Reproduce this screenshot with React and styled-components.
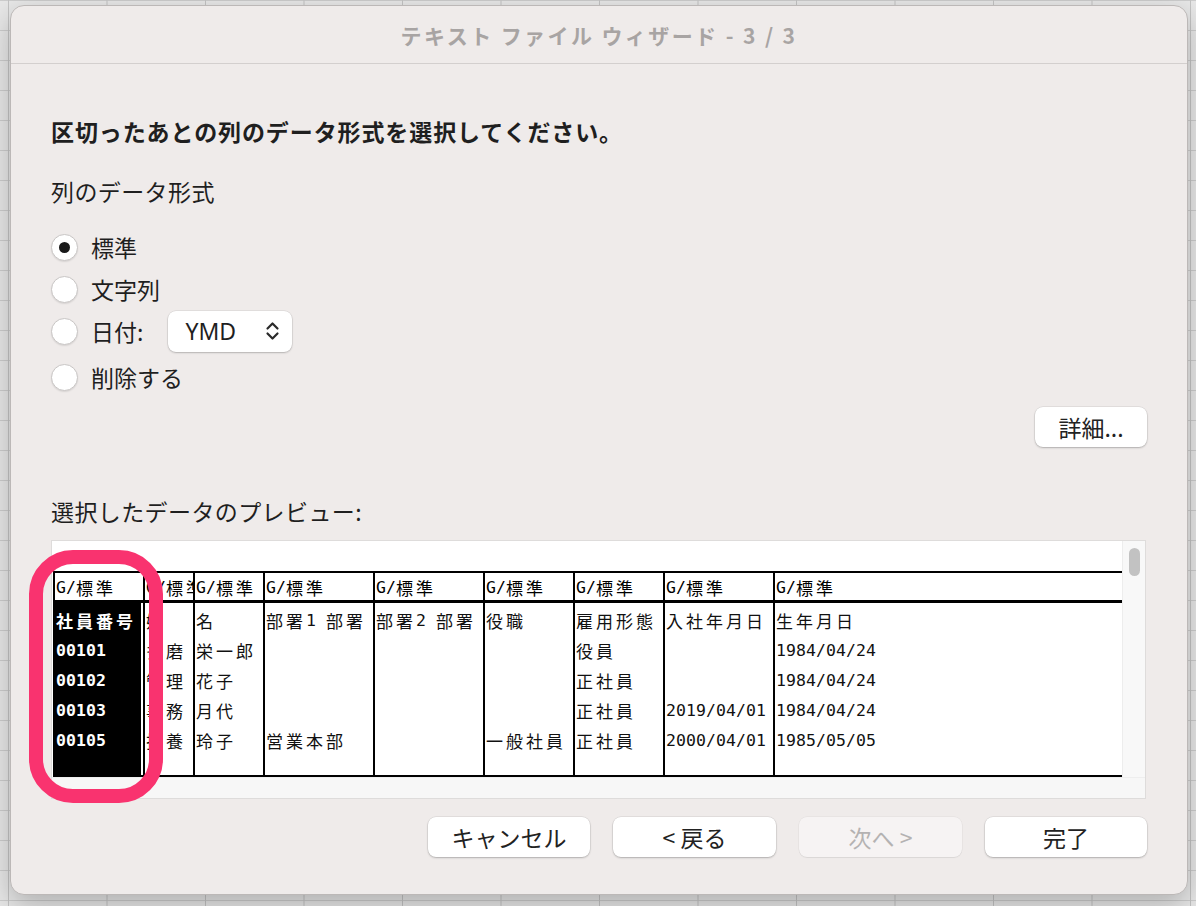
import styled, { createGlobalStyle } from "styled-components";

const GlobalStyle = createGlobalStyle`
  html, body {
    margin: 0;
    padding: 0;
  }
  body {
    width: 1196px;
    height: 906px;
    overflow: hidden;
    font-family: "Noto Sans CJK JP", "Noto Sans", sans-serif;
    color: #1f1f1f;
    background-color: #e8e8e8;
    background-image: linear-gradient(to right, #c4c4c4 1px, transparent 1px),
      linear-gradient(to bottom, #cdcdcd 1px, transparent 1px);
    background-size: 98.5px 30px;
    background-position: 8px 0;
  }
`;

const Page = styled.div`
  padding: 5px 8px 11px 10px;
`;

const Dialog = styled.div`
  width: 1178px;
  height: 890px;
  box-sizing: border-box;
  background: #efebea;
  border: 1px solid #bcb8b7;
  border-radius: 14px;
  box-shadow: 0 10px 30px rgba(0, 0, 0, 0.25);
  display: flex;
  flex-direction: column;
`;

const TitleBar = styled.div`
  height: 57px;
  border-bottom: 1px solid #d3cfce;
  display: flex;
  align-items: center;
  justify-content: center;
  font-size: 21px;
  font-weight: bold;
  letter-spacing: 2.4px;
  color: #a8a4a3;
`;

const Body = styled.div`
  padding: 52px 40px 0;
  display: flex;
  flex-direction: column;
`;

const Heading = styled.h1`
  margin: 0;
  font-size: 23px;
  line-height: 30px;
  font-weight: bold;
  letter-spacing: 0.9px;
`;

const Label = styled.div`
  margin-top: ${(p) => p.$top}px;
  font-size: 23px;
  line-height: 30px;
  letter-spacing: 0.4px;
`;

const RadioList = styled.div`
  margin-top: 20px;
  display: flex;
  flex-direction: column;
`;

const RadioRow = styled.div`
  height: 42px;
  margin-top: ${(p) => (p.$gap ? 4 : 0)}px;
  display: flex;
  align-items: center;
  font-size: 23px;
`;

const RadioCircle = styled.span`
  width: 27px;
  height: 27px;
  box-sizing: border-box;
  border-radius: 50%;
  background: #fff;
  border: 1px solid #c9c6c5;
  box-shadow: 0 1px 1.5px rgba(0, 0, 0, 0.1);
  margin-right: 13px;
  display: flex;
  align-items: center;
  justify-content: center;

  &::after {
    content: "";
    display: ${(p) => (p.$checked ? "block" : "none")};
    width: 11px;
    height: 11px;
    border-radius: 50%;
    background: #1a1a1a;
  }
`;

const Select = styled.div`
  margin-left: 25px;
  width: 124px;
  height: 41px;
  box-sizing: border-box;
  padding: 0 12px 0 17px;
  background: #fff;
  border-radius: 8px;
  box-shadow: 0 0 0 0.5px rgba(0, 0, 0, 0.1), 0 1px 2px rgba(0, 0, 0, 0.2);
  display: flex;
  align-items: center;
  justify-content: space-between;
  font-family: "Noto Sans", "Noto Sans CJK JP", sans-serif;
  font-size: 23px;
`;

const DetailsRow = styled.div`
  margin-top: 9px;
  display: flex;
  justify-content: flex-end;
`;

const Button = styled.button`
  width: ${(p) => p.$w}px;
  height: 40px;
  padding: 0;
  border: none;
  border-radius: 8px;
  font-family: "Noto Sans CJK JP", sans-serif;
  font-size: 23px;
  color: ${(p) => (p.disabled ? "#b4b2b2" : "#222")};
  background: ${(p) => (p.disabled ? "#f6f3f3" : "#fff")};
  box-shadow: ${(p) =>
    p.disabled
      ? "0 0 0 0.5px rgba(0,0,0,0.06), 0 1px 1px rgba(0,0,0,0.06)"
      : "0 0 0 0.5px rgba(0,0,0,0.1), 0 1px 2px rgba(0,0,0,0.22)"};
`;

const PreviewBox = styled.div`
  margin-top: 14px;
  height: 259px;
  margin-right: 1px;
  box-sizing: border-box;
  border: 1px solid #dedcdb;
  background: #fff;
  position: relative;
  display: grid;
  grid-template-columns: 1fr 23px;
  grid-template-rows: 1fr 21px;
`;

const TableArea = styled.div`
  padding: 30px 0 0 1px;
  overflow: hidden;
`;

const VTrack = styled.div`
  background: #f8f8f8;
  border-left: 1px solid #ededed;
  padding-top: 7px;
`;

const Thumb = styled.div`
  width: 11px;
  height: 28px;
  margin-left: 6px;
  border-radius: 6px;
  background: #c2c2c2;
`;

const HTrack = styled.div`
  grid-column: 1 / span 2;
  background: #f7f7f7;
  border-top: 1px solid #eeeeee;
`;

const Table = styled.div`
  width: 1072px;
  height: 206px;
  box-sizing: border-box;
  border: 2px solid #000;
  display: flex;
`;

const Column = styled.div`
  flex: 0 0 ${(p) => p.$w}px;
  box-sizing: border-box;
  border-left: ${(p) => (p.$first ? "none" : "2px solid #000")};
  display: flex;
  flex-direction: column;
  overflow: hidden;
`;

const HeaderCell = styled.div`
  height: 25px;
  padding: 2px 0 0 1px;
  line-height: 25px;
  border-bottom: 3px solid #000;
  white-space: nowrap;
  color: #000;
`;

const ColumnBody = styled.div`
  flex: 1;
  padding-top: 3px;
  margin-right: ${(p) => (p.$selected ? 2 : 0)}px;
  background: ${(p) => (p.$selected ? "#000" : "#fff")};
  color: ${(p) => (p.$selected ? "#fff" : "#111")};
  font-weight: ${(p) => (p.$selected ? "bold" : "normal")};
`;

const Cell = styled.div`
  height: 30px;
  line-height: 30px;
  padding-left: 1px;
  white-space: nowrap;
`;

const Glyph = styled.span`
  display: inline-block;
  vertical-align: top;
  width: ${(p) => (p.$wide ? 20 : 10)}px;
  font-family: ${(p) =>
    p.$wide
      ? `"Noto Sans CJK JP", sans-serif`
      : `"DejaVu Sans Mono", "Liberation Mono", monospace`};
  font-size: ${(p) => (p.$wide ? 17 : 16.5)}px;
`;

const Ring = styled.div`
  position: absolute;
  left: -23px;
  top: 9px;
  width: 134px;
  height: 253px;
  box-sizing: border-box;
  border: 14px solid #f9336f;
  border-radius: 44px;
  pointer-events: none;
`;

const ButtonRow = styled.div`
  margin-top: 18px;
  display: flex;
  justify-content: flex-end;
  gap: 23px;
`;

const Mono = ({ text }) =>
  Array.from(text).map((c, i) => (
    <Glyph key={i} $wide={c.charCodeAt(0) > 0x2e80}>
      {c === " " ? "\u00a0" : c}
    </Glyph>
  ));

const columns = [
  { w: 88, rows: ["社員番号", "00101", "00102", "00103", "00105"] },
  { w: 50, rows: ["姓", "多磨", "管理", "事務", "扶養"] },
  { w: 70, rows: ["名", "栄一郎", "花子", "月代", "玲子"] },
  { w: 110, rows: ["部署1 部署", "", "", "", "営業本部"] },
  { w: 110, rows: ["部署2 部署", "", "", "", ""] },
  { w: 90, rows: ["役職", "", "", "", "一般社員"] },
  { w: 90, rows: ["雇用形態", "役員", "正社員", "正社員", "正社員"] },
  { w: 110, rows: ["入社年月日", "", "", "2019/04/01", "2000/04/01"] },
  { w: 350, rows: ["生年月日", "1984/04/24", "1984/04/24", "1984/04/24", "1985/05/05"] },
];

const Chevrons = () => (
  <svg width="15" height="22" viewBox="0 0 15 22" fill="none" stroke="#2a2a2a" strokeWidth="2.2" strokeLinecap="round" strokeLinejoin="round">
    <path d="M2.5 8.5 L7.5 3.5 L12.5 8.5" />
    <path d="M2.5 13.5 L7.5 18.5 L12.5 13.5" />
  </svg>
);

const App = () => {
  return (
    <>
      <GlobalStyle />
      <Page>
        <Dialog>
          <TitleBar>テキスト ファイル ウィザード - 3 / 3</TitleBar>
          <Body>
            <Heading>区切ったあとの列のデータ形式を選択してください。</Heading>
            <Label $top={30}>列のデータ形式</Label>
            <RadioList>
              <RadioRow>
                <RadioCircle $checked />
                標準
              </RadioRow>
              <RadioRow>
                <RadioCircle />
                文字列
              </RadioRow>
              <RadioRow>
                <RadioCircle />
                日付:
                <Select>
                  YMD
                  <Chevrons />
                </Select>
              </RadioRow>
              <RadioRow $gap>
                <RadioCircle />
                削除する
              </RadioRow>
            </RadioList>
            <DetailsRow>
              <Button $w={112}>詳細...</Button>
            </DetailsRow>
            <Label $top={49}>選択したデータのプレビュー:</Label>
            <PreviewBox>
              <TableArea>
                <Table>
                  {columns.map((col, i) => (
                    <Column key={i} $w={col.w} $first={i === 0}>
                      <HeaderCell>
                        <Mono text="G/標準" />
                      </HeaderCell>
                      <ColumnBody $selected={i === 0}>
                        {col.rows.map((r, j) => (
                          <Cell key={j}>
                            <Mono text={r} />
                          </Cell>
                        ))}
                      </ColumnBody>
                    </Column>
                  ))}
                </Table>
              </TableArea>
              <VTrack>
                <Thumb />
              </VTrack>
              <HTrack />
              <Ring />
            </PreviewBox>
            <ButtonRow>
              <Button $w={162}>キャンセル</Button>
              <Button $w={163}>&lt; 戻る</Button>
              <Button $w={163} disabled>
                次へ &gt;
              </Button>
              <Button $w={162}>完了</Button>
            </ButtonRow>
          </Body>
        </Dialog>
      </Page>
    </>
  );
};

export default App;
